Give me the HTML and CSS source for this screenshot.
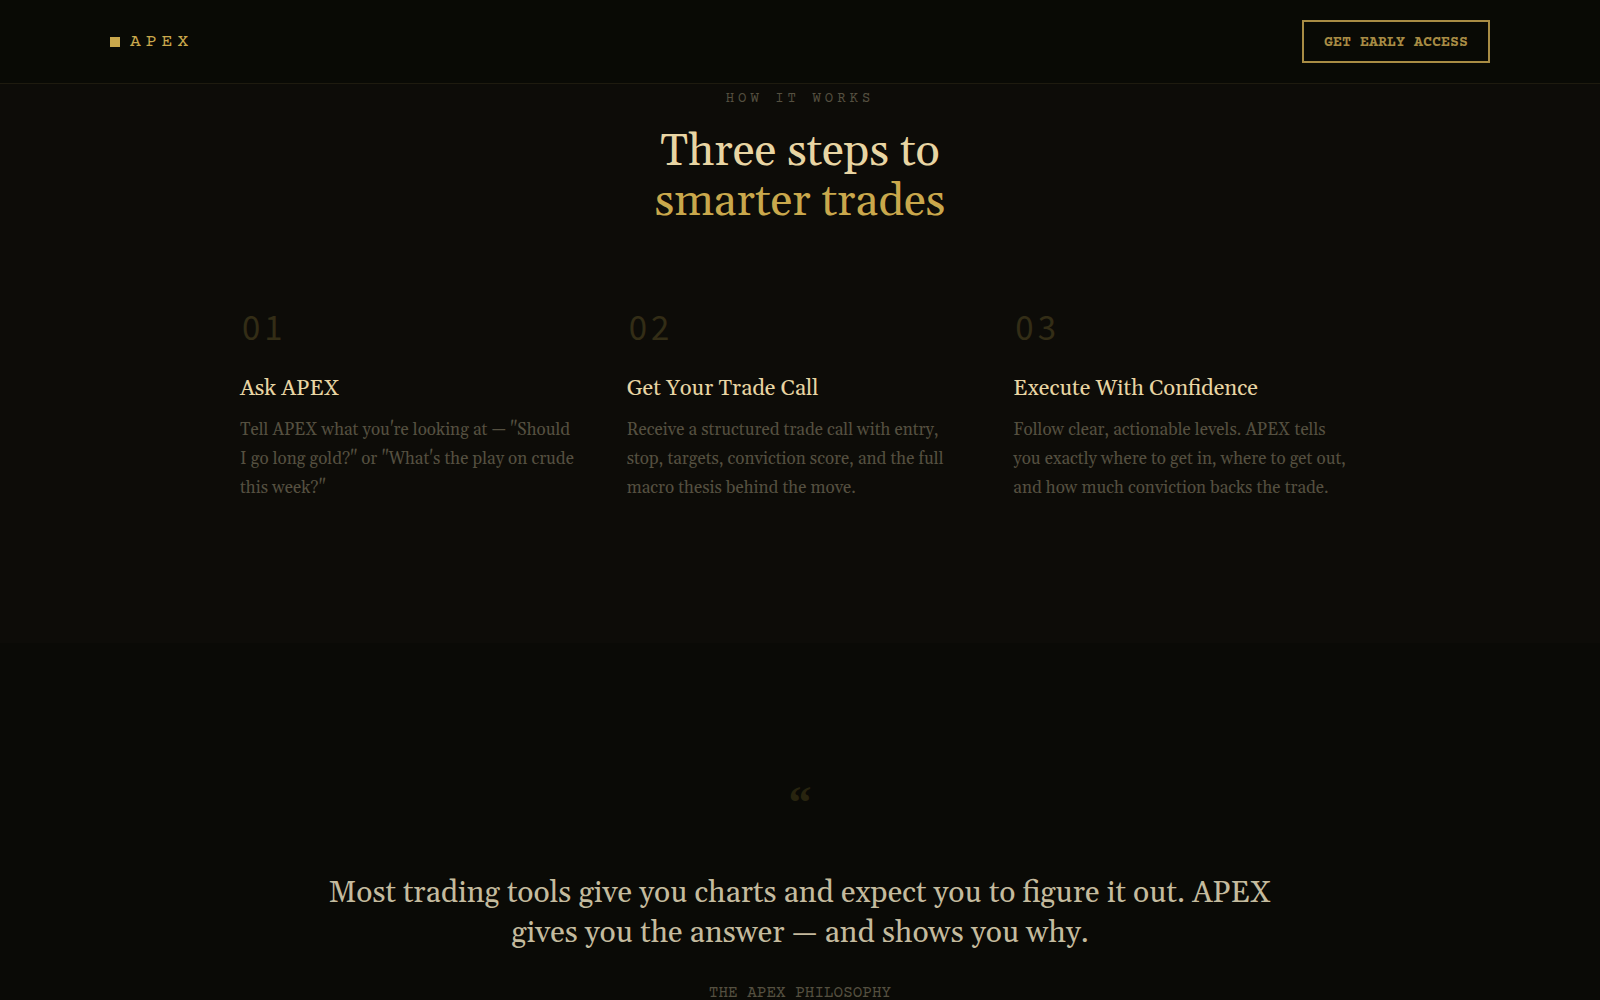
FILE: index.html
```
<!DOCTYPE html>
<html lang="en">
<head>
  <meta charset="UTF-8" />
  <meta name="viewport" content="width=device-width, initial-scale=1.0"/>
  <title>APEX</title>
  <link rel="stylesheet" href="styles.css">
</head>
<body>

  <!-- Nav -->
  <header class="nav">
    <a class="logo" href="#"><span class="logo-mark"></span>APEX</a>
    <button class="nav-btn" type="button">GET EARLY ACCESS</button>
  </header>

  <main>
    <!-- How it works -->
    <section class="how">
      <p class="eyebrow">HOW IT WORKS</p>
      <h2>Three steps to<br><span class="gold">smarter trades</span></h2>

      <div class="steps">
        <div class="step">
          <div class="step-num">01</div>
          <h3>Ask APEX</h3>
          <p>Tell APEX what you're looking at — "Should<br>I go long gold?" or "What's the play on crude<br>this week?"</p>
        </div>
        <div class="step">
          <div class="step-num">02</div>
          <h3>Get Your Trade Call</h3>
          <p>Receive a structured trade call with entry,<br>stop, targets, conviction score, and the full<br>macro thesis behind the move.</p>
        </div>
        <div class="step">
          <div class="step-num">03</div>
          <h3>Execute With Confidence</h3>
          <p>Follow clear, actionable levels. APEX tells<br>you exactly where to get in, where to get out,<br>and how much conviction backs the trade.</p>
        </div>
      </div>
    </section>

    <!-- Quote -->
    <section class="quote">
      <div class="quote-mark">“</div>
      <blockquote>Most trading tools give you charts and expect you to figure it out. APEX gives you the answer — and shows you why.</blockquote>
      <p class="quote-by">THE APEX PHILOSOPHY</p>
    </section>
  </main>

</body>
</html>
```
FILE: styles.css
```
* { margin: 0; padding: 0; box-sizing: border-box; }

body {
  background: #0a0a06;
  color: #e8d5a3;
  font-family: Gelasio, Georgia, 'Liberation Serif', serif;
}

/* Nav */
.nav {
  display: flex;
  align-items: center;
  justify-content: space-between;
  padding: 20px 110px;
  background: #090a05;
  border-bottom: 1px solid #1e1b0f;
}

.logo {
  display: flex;
  align-items: center;
  gap: 10px;
  color: #c9a84c;
  font-family: 'Courier Prime', 'Nimbus Mono PS', 'Liberation Mono', monospace;
  font-size: 18px;
  letter-spacing: 5px;
  text-decoration: none;
}

.logo-mark { width: 10px; height: 10px; background: #c9a84c; }

.nav-btn {
  padding: 13px 20px 11px;
  background: transparent;
  border: 2px solid #a88c44;
  color: #a88c44;
  font-family: 'Courier Prime', 'Nimbus Mono PS', 'Liberation Mono', monospace;
  font-size: 15px;
  font-weight: 700;
  line-height: 15px;
  cursor: pointer;
}

/* How it works */
.how {
  padding: 7px 40px 140px;
  background: #0d0c08;
  text-align: center;
}

.eyebrow {
  margin-bottom: 20px;
  color: #555040;
  font-family: 'Courier Prime', 'Nimbus Mono PS', 'Liberation Mono', monospace;
  font-size: 14px;
  line-height: 16px;
  letter-spacing: 4px;
}

.how h2 {
  margin-bottom: 79px;
  font-size: 45px;
  font-weight: 400;
  line-height: 50px;
}

.gold { color: #c9a84c; }

.steps {
  display: grid;
  grid-template-columns: repeat(3, 1fr);
  gap: 40px;
  max-width: 1120px;
  margin: 0 auto;
  text-align: left;
}

.step-num {
  margin-bottom: 28px;
  padding-left: 2px;
  color: #332d16;
  font-family: 'Noto Sans CJK JP', monospace;
  font-size: 33px;
  line-height: 40px;
  letter-spacing: 4px;
}

.step h3 {
  margin-bottom: 12px;
  font-size: 22px;
  font-weight: 400;
  line-height: 30px;
}

.step p {
  color: #555040;
  font-size: 17px;
  line-height: 29px;
}

/* Quote */
.quote {
  padding: 130px 40px 0;
  text-align: center;
}

.quote-mark {
  margin-bottom: 40px;
  color: #28240f;
  font-family: 'Liberation Serif', serif;
  font-size: 46px;
  font-weight: 700;
  line-height: 60px;
}

.quote blockquote {
  max-width: 960px;
  margin: 0 auto 30px;
  color: #c4bb9e;
  font-size: 30px;
  line-height: 40px;
}

.quote-by {
  color: #555040;
  font-family: 'Courier Prime', 'Nimbus Mono PS', 'Liberation Mono', monospace;
  font-size: 16px;
  line-height: 20px;
}
```
